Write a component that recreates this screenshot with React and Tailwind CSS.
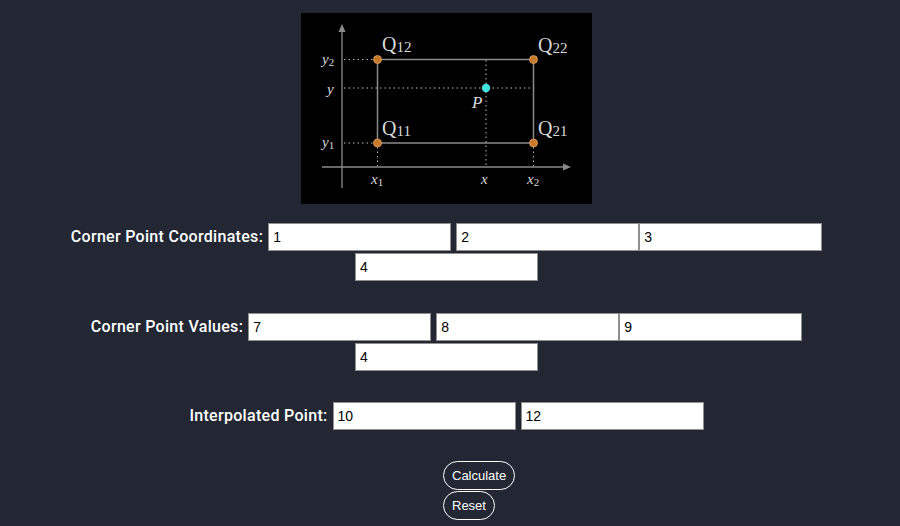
import React, { useState } from "react";

const Diagram = () => {
  const dot = "#b8b8b8";
  const line = "#8a8a8a";
  const txt = "#d9d9d9";
  return (
    <svg width="291" height="191" viewBox="0 0 291 191" className="block bg-black">
      {/* axes */}
      <line x1="41" y1="16" x2="41" y2="175" stroke={line} strokeWidth="1.3" />
      <polygon points="41,11 37.5,19 44.5,19" fill={line} />
      <line x1="21" y1="154" x2="265" y2="154" stroke={line} strokeWidth="1.3" />
      <polygon points="270,154 262,150.5 262,157.5" fill={line} />

      {/* dotted guides */}
      <g stroke={dot} strokeWidth="1" strokeDasharray="1.5 3">
        <line x1="43" y1="46.5" x2="72" y2="46.5" />
        <line x1="43" y1="75" x2="232" y2="75" />
        <line x1="43" y1="130" x2="72" y2="130" />
        <line x1="76.5" y1="134" x2="76.5" y2="153" />
        <line x1="185" y1="47" x2="185" y2="153" />
        <line x1="232.5" y1="134" x2="232.5" y2="153" />
      </g>

      {/* rectangle */}
      <rect x="76.5" y="46.5" width="156" height="83.5" fill="none" stroke={line} strokeWidth="1.5" />

      {/* corner points */}
      {[
        [76.5, 46.5],
        [232.5, 46.5],
        [76.5, 130],
        [232.5, 130],
      ].map(([cx, cy], i) => (
        <circle key={i} cx={cx} cy={cy} r="4" fill="#c77a2c" stroke="#e0a060" strokeWidth="0.8" />
      ))}
      <circle cx="185" cy="75" r="4.2" fill="#3fe3dc" />

      <g fill={txt} fontFamily="'Liberation Serif', serif">
        <text x="81" y="38" fontSize="20">
          Q<tspan fontSize="15" dy="1">12</tspan>
        </text>
        <text x="237" y="39" fontSize="20">
          Q<tspan fontSize="15" dy="1">22</tspan>
        </text>
        <text x="81" y="122" fontSize="20">
          Q<tspan fontSize="15" dy="1">11</tspan>
        </text>
        <text x="237" y="122" fontSize="20">
          Q<tspan fontSize="15" dy="1">21</tspan>
        </text>
        <text x="171" y="95" fontSize="17" fontStyle="italic">P</text>

        <text x="21" y="51" fontSize="15" fontStyle="italic">
          y<tspan fontSize="11" fontStyle="normal" dy="2">2</tspan>
        </text>
        <text x="26" y="81" fontSize="15" fontStyle="italic">y</text>
        <text x="21" y="134" fontSize="15" fontStyle="italic">
          y<tspan fontSize="11" fontStyle="normal" dy="2">1</tspan>
        </text>

        <text x="70" y="171" fontSize="15" fontStyle="italic">
          x<tspan fontSize="11" fontStyle="normal" dy="2">1</tspan>
        </text>
        <text x="180" y="171" fontSize="15" fontStyle="italic">x</text>
        <text x="226" y="171" fontSize="15" fontStyle="italic">
          x<tspan fontSize="11" fontStyle="normal" dy="2">2</tspan>
        </text>
      </g>
    </svg>
  );
};

const Field = ({ value, onChange, className = "" }) => (
  <input
    type="text"
    value={value}
    onChange={(e) => onChange(e.target.value)}
    className={`w-[183px] h-[28px] border border-[#8f8f8f] bg-white px-[4px] text-[14px] text-black font-['Liberation_Sans',Arial,sans-serif] outline-none ${className}`}
  />
);

const Label = ({ children }) => (
  <span className="text-white text-[16px] leading-[20px] font-medium tracking-[0.3px] font-['Roboto','Liberation_Sans',sans-serif] mr-[5px]">
    {children}
  </span>
);

const initial = {
  c: ["1", "2", "3", "4"],
  v: ["7", "8", "9", "4"],
  p: ["10", "12"],
};

export default function App() {
  const [c, setC] = useState(initial.c);
  const [v, setV] = useState(initial.v);
  const [p, setP] = useState(initial.p);

  const upd = (arr, set, i) => (val) => {
    const next = [...arr];
    next[i] = val;
    set(next);
  };

  const reset = () => {
    setC(initial.c);
    setV(initial.v);
    setP(initial.p);
  };

  return (
    <div className="min-h-screen bg-[#222733] pt-[13px]">
      <div className="w-[893px]">
        <div className="flex justify-center">
          <Diagram />
        </div>

        {/* Corner point coordinates */}
        <div className="mt-[19px] flex flex-wrap justify-center items-center gap-y-[1px]">
          <Label>Corner Point Coordinates:</Label>
          <Field value={c[0]} onChange={upd(c, setC, 0)} className="mr-[5px]" />
          <Field value={c[1]} onChange={upd(c, setC, 1)} />
          <Field value={c[2]} onChange={upd(c, setC, 2)} />
          <div className="basis-full h-0" />
          <Field value={c[3]} onChange={upd(c, setC, 3)} />
        </div>

        {/* Corner point values */}
        <div className="mt-[32px] flex flex-wrap justify-center items-center gap-y-[1px]">
          <Label>Corner Point Values:</Label>
          <Field value={v[0]} onChange={upd(v, setV, 0)} className="mr-[5px]" />
          <Field value={v[1]} onChange={upd(v, setV, 1)} />
          <Field value={v[2]} onChange={upd(v, setV, 2)} />
          <div className="basis-full h-0" />
          <Field value={v[3]} onChange={upd(v, setV, 3)} />
        </div>

        {/* Interpolated point */}
        <div className="mt-[31px] flex justify-center items-center">
          <Label>Interpolated Point:</Label>
          <Field value={p[0]} onChange={upd(p, setP, 0)} className="mr-[5px]" />
          <Field value={p[1]} onChange={upd(p, setP, 1)} />
        </div>

        <div className="mt-[31px] ml-[443px] flex flex-col items-start gap-[1px]">
          <button className="h-[29px] px-[8px] rounded-full border border-white text-white text-[13px] font-['Liberation_Sans',sans-serif]">
            Calculate
          </button>
          <button
            onClick={reset}
            className="h-[29px] px-[8px] rounded-full border border-white text-white text-[13px] font-['Liberation_Sans',sans-serif]"
          >
            Reset
          </button>
        </div>
      </div>
    </div>
  );
}
